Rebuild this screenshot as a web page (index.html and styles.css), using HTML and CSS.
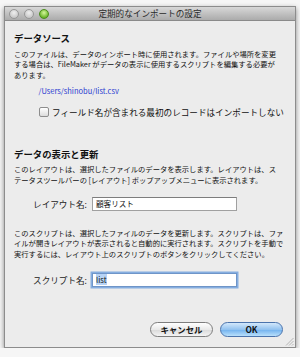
FILE: index.html
```html
<!DOCTYPE html>
<html lang="ja">
<head>
    <meta charset="UTF-8">
    <meta name="viewport" content="width=device-width, initial-scale=1.0">
    <title>定期的なインポートの設定</title>
    <link rel="stylesheet" href="styles.css">
</head>
<body>
    <div class="window">
        <div class="titlebar">
            <div class="lights">
                <span class="light"></span>
                <span class="light"></span>
                <span class="light green"></span>
            </div>
            <div class="title">定期的なインポートの設定</div>
        </div>

        <div class="content">
            <h1 class="section-title first">データソース</h1>
            <p class="note">このファイルは、データのインポート時に使用されます。ファイルや場所を変更<br>する場合は、FileMaker がデータの表示に使用するスクリプトを編集する必要が<br>あります。</p>
            <div class="path">/Users/shinobu/list.csv</div>
            <label class="check-row">
                <span class="checkbox"></span>
                <span>フィールド名が含まれる最初のレコードはインポートしない</span>
            </label>

            <h2 class="section-title second">データの表示と更新</h2>
            <p class="note">このレイアウトは、選択したファイルのデータを表示します。レイアウトは、ス<br>テータスツールバーの [レイアウト] ポップアップメニューに表示されます。</p>
            <div class="form-row layout-row">
                <span class="form-label">レイアウト名:</span>
                <span class="field">顧客リスト</span>
            </div>

            <p class="note script-note">このスクリプトは、選択したファイルのデータを更新します。スクリプトは、ファ<br>イルが開きレイアウトが表示されると自動的に実行されます。スクリプトを手動で<br>実行するには、レイアウト上のスクリプトのボタンをクリックしてください。</p>
            <div class="form-row script-row">
                <span class="form-label">スクリプト名:</span>
                <span class="field focused"><span class="selected">list</span></span>
            </div>

            <div class="buttons">
                <button class="btn">キャンセル</button>
                <button class="btn default">OK</button>
            </div>
        </div>

        <svg class="grip" width="9" height="9" viewBox="0 0 9 9">
            <line x1="8.5" y1="1" x2="1" y2="8.5" stroke="#a8a8a8" stroke-width="0.8"/>
            <line x1="8.5" y1="4" x2="4" y2="8.5" stroke="#a8a8a8" stroke-width="0.8"/>
            <line x1="8.5" y1="7" x2="7" y2="8.5" stroke="#a8a8a8" stroke-width="0.8"/>
        </svg>
    </div>
</body>
</html>
```

FILE: styles.css
```css
body {
    margin: 0;
    background-color: #f6f6f6;
    font-family: "Noto Sans CJK JP", sans-serif;
    color: #111;
}
.window {
    position: relative;
    margin: 6px 4px 0;
    border: 1px solid #8c8c8c;
    background-color: #ececec;
    box-shadow: 0 2px 5px rgba(0, 0, 0, 0.45);
}
.titlebar {
    display: grid;
    grid-template-columns: 1fr auto 1fr;
    align-items: center;
    height: 13px;
    border-bottom: 1px solid #8a8a8a;
    background: linear-gradient(#d8d8d8, #ababab);
}
.lights {
    display: flex;
    gap: 5px;
    padding-left: 4px;
}
.light {
    width: 8px;
    height: 8px;
    border-radius: 50%;
    border: 0.5px solid #979797;
    background: radial-gradient(circle at 50% 35%, #efefef, #b9b9b9);
}
.light.green {
    border-color: #4c8c1e;
    background: radial-gradient(circle at 50% 35%, #d6f79c, #6cb52c 70%, #4f9a1a);
}
.title {
    font-size: 8.6px;
    line-height: 13px;
    color: #2a2a2a;
}
.content {
    padding: 0 9px 10px;
}
.section-title {
    margin: 0;
    font-size: 9.4px;
    line-height: 11px;
    font-weight: bold;
}
.section-title.first {
    margin-top: 12px;
}
.section-title.second {
    margin-top: 31px;
}
.note {
    margin: 4.5px 0 0;
    font-size: 7.3px;
    line-height: 10.5px;
    white-space: nowrap;
}
.script-note {
    margin-top: 17px;
}
.path {
    margin: 4.5px 0 0 24.5px;
    font-size: 7.5px;
    line-height: 11px;
    color: #2a3bd0;
}
.check-row {
    display: flex;
    align-items: center;
    gap: 3px;
    margin: 11px 0 0 25px;
    font-size: 8.6px;
    line-height: 11px;
}
.checkbox {
    width: 8px;
    height: 8px;
    border: 1px solid #8d8d8d;
    border-radius: 2px;
    background: linear-gradient(#ffffff, #dcdcdc);
}
.form-row {
    display: flex;
    align-items: center;
    gap: 5px;
}
.layout-row {
    margin-top: 11.5px;
}
.script-row {
    margin-top: 13.5px;
}
.form-label {
    width: 73px;
    text-align: right;
    font-size: 8.6px;
    color: #222;
}
.field {
    box-sizing: border-box;
    width: 145px;
    height: 14px;
    padding: 0 3px;
    border: 1px solid #a0a0a0;
    border-top-color: #7d7d7d;
    background-color: #fff;
    font-size: 7.6px;
    line-height: 12px;
}
.field.focused {
    box-shadow: 0 0 0 1.5px #86aee0;
    border-color: #6f95c8;
}
.selected {
    background-color: #b7d3f5;
}
.buttons {
    display: flex;
    justify-content: flex-end;
    gap: 7px;
    margin-top: 35px;
    padding-right: 3px;
}
.btn {
    width: 63px;
    height: 15px;
    padding: 0;
    border: 1px solid #7d7d7d;
    border-radius: 8px;
    background: linear-gradient(#ffffff, #e9e9e9 50%, #d9d9d9 51%, #f4f4f4);
    font-family: "Noto Sans CJK JP", sans-serif;
    font-size: 8.4px;
    font-weight: bold;
    line-height: 13px;
    color: #111;
}
.btn.default {
    border-color: #4b74ad;
    background: linear-gradient(#d3e8fb, #93c3f0 50%, #6fb0ee 51%, #b9e0fb);
}
.grip {
    position: absolute;
    right: 1px;
    bottom: 1px;
}
```
